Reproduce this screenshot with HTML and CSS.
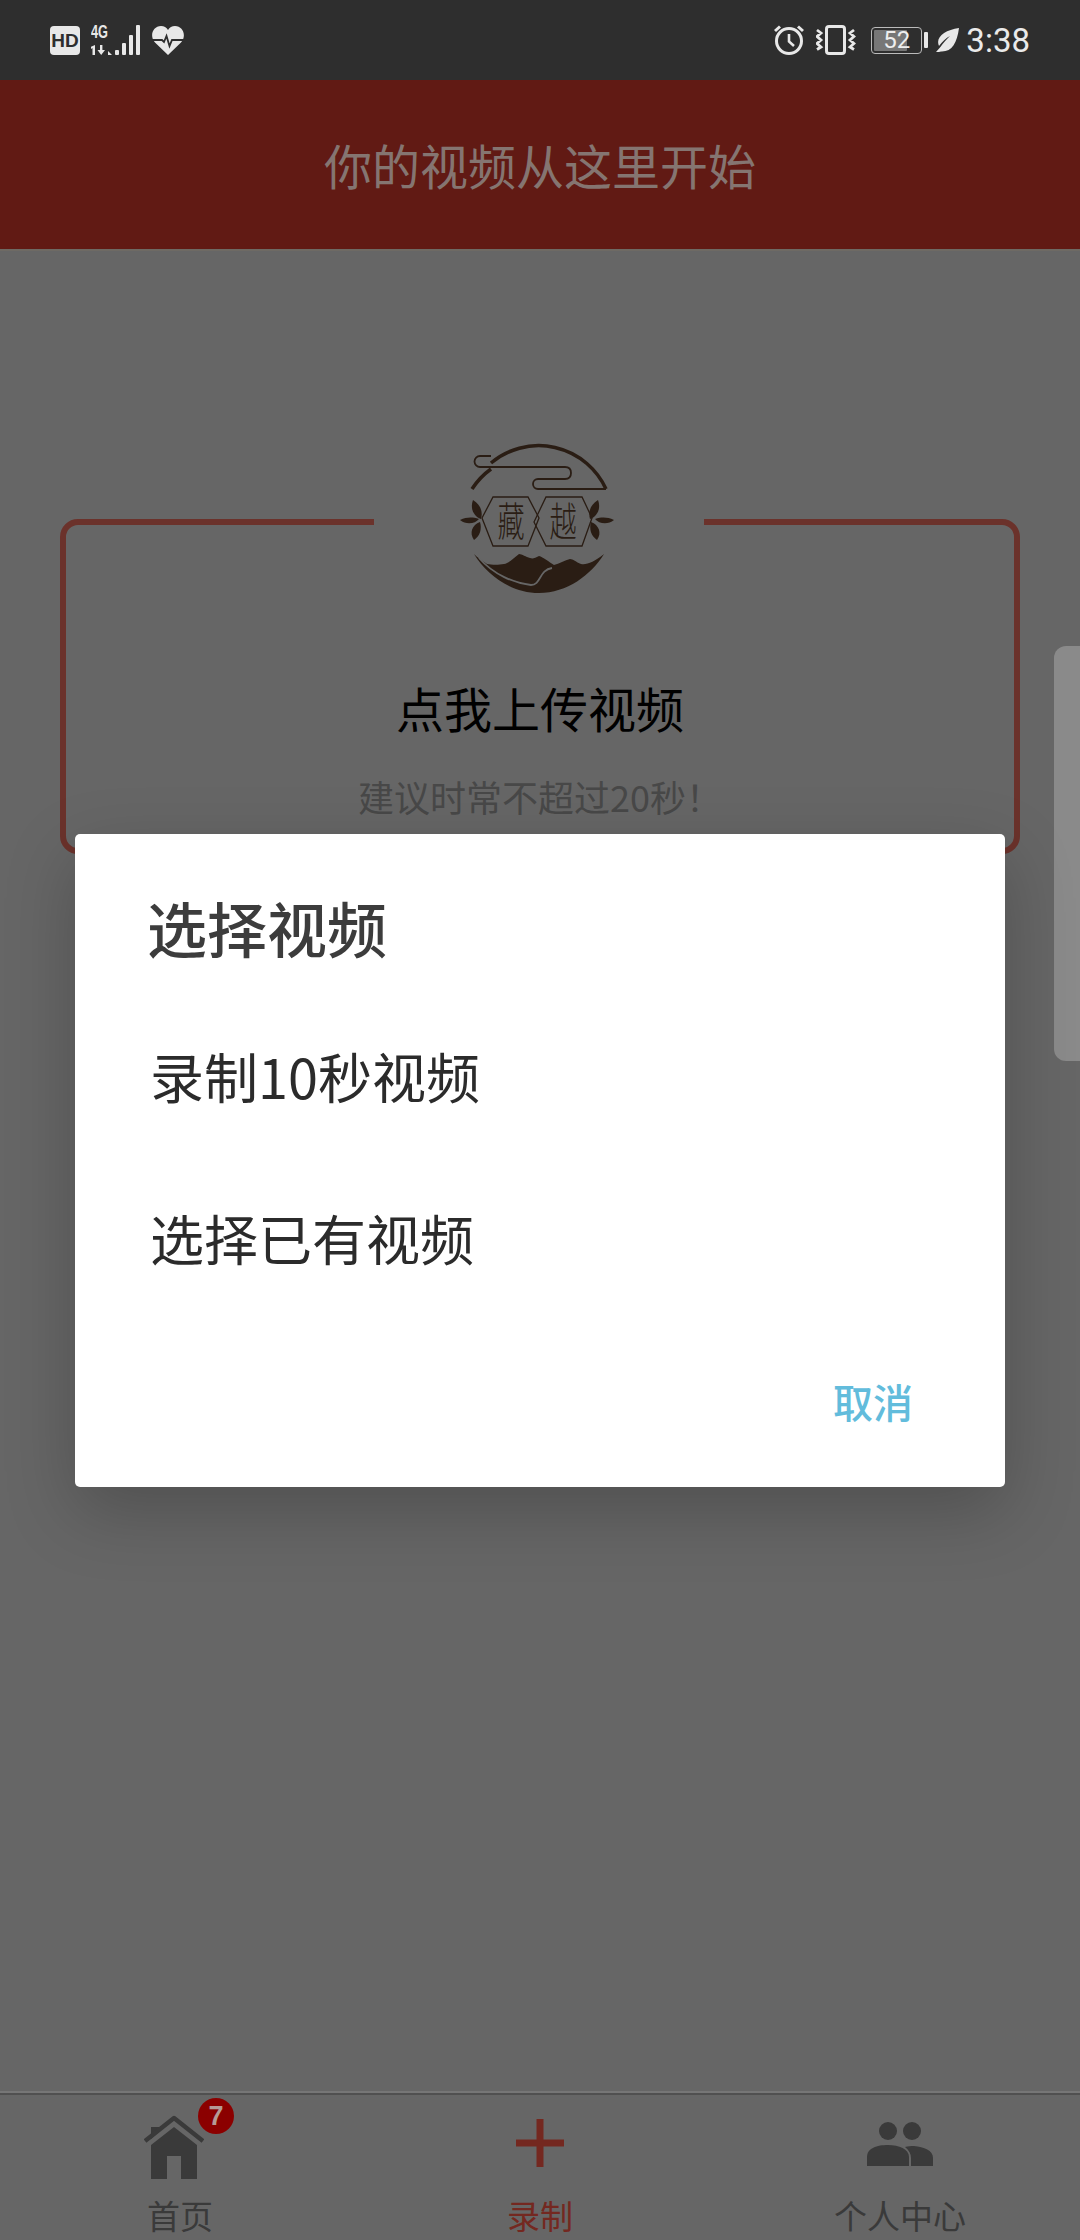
FILE: index.html
```html
<!DOCTYPE html>
<html lang="zh">
<head>
<meta charset="utf-8">
<title>选择视频</title>
<link rel="stylesheet" href="styles.css">
</head>
<body>
<div class="screen">
  <div class="status">
    <div class="status-left">
      <svg class="ic-hd" viewBox="0 0 30 29"><rect width="30" height="29" rx="4" fill="#e8e8e8"/><text x="15" y="21" class="hd-text">HD</text></svg>
      <svg class="ic-signal" viewBox="0 -5 50 37">
        <text x="0" y="14" class="net-text" textLength="17" lengthAdjust="spacingAndGlyphs">4G</text>
        <path d="M4 21v10H1.500v-7L0 25v-2.200zM9 21h2.400v5H14l-3.800 5L6.500 26H9z" fill="#e8e8e8"/>
        <path d="M17 31v-4l4 4z" fill="#e8e8e8"/>
        <rect x="24" y="26" width="4" height="5" rx="1" fill="#e8e8e8"/>
        <rect x="31" y="19" width="4" height="12" rx="1" fill="#e8e8e8"/>
        <rect x="38" y="11" width="4" height="20" rx="1" fill="#e8e8e8"/>
        <rect x="45" y="1" width="4" height="30" rx="1" fill="#e8e8e8"/>
      </svg>
      <svg class="ic-heart" viewBox="0 0 32 29">
        <path d="M16 29 3 16.500C-3 10 1 0 9 0c3 0 5.500 1.500 7 4 1.500-2.500 4-4 7-4 8 0 12 10 6 16.500z" fill="#e8e8e8"/>
        <path d="M0 14h10l2 2 2.500-6 3 10 2.500-6h12" fill="none" stroke="#2e2e2e" stroke-width="1.800"/>
      </svg>
    </div>
    <div class="status-right">
      <svg class="ic-alarm" viewBox="0 0 30 30">
        <circle cx="15" cy="16" r="12.500" fill="none" stroke="#e8e8e8" stroke-width="3"/>
        <path d="M15 9v7.500l5 4.500" fill="none" stroke="#e8e8e8" stroke-width="2.600"/>
        <path d="M1 6l5-4.500M29 6l-5-4.500" fill="none" stroke="#e8e8e8" stroke-width="3"/>
      </svg>
      <svg class="ic-vibrate" viewBox="0 0 40 30">
        <rect x="10.500" y="1.500" width="18" height="27" rx="2.500" fill="none" stroke="#e8e8e8" stroke-width="3"/>
        <path d="M1 5l4 3-4 3.500 4 3.500-4 3.500 4 3.500-4 2.500M38 5l-4 3 4 3.500-4 3.500 4 3.500-4 3.500 4 2.500" fill="none" stroke="#e8e8e8" stroke-width="2.800"/>
      </svg>
      <div class="battery-wrap">
        <div class="battery"><span class="battery-fill"></span><span class="battery-num">52</span></div>
        <span class="battery-nub"></span>
      </div>
      <svg class="ic-leaf" viewBox="0 0 23 24"><path d="M23 0C21 15 16 24 5 23.500L3 24H0l4-4.500C8 14 11 11 14 8c-4 2-8 6-11 10C-1 9 9 2 23 0z" fill="#e8e8e8"/></svg>
      <span class="time">3:38</span>
    </div>
  </div>

  <header class="header">你的视频从这里开始</header>

  <main class="main">
    <section class="card">
      <div class="logo">
        <svg class="logo-svg" viewBox="0 0 200 170">
          <g fill="none" stroke="#2a1d14">
            <path d="M33 59A74 74 0 0 1 52 39" stroke-width="3.500"/>
            <path d="M52 33A74 74 0 0 1 167 59" stroke-width="3.500"/>
            <path d="M52 26H41a5 5 0 0 0 0 11h85q6 0 6 6t-6 6H99a5 5 0 0 0 0 10h68" stroke-width="1.800"/>
            <path d="M43 88 54 67H89L100 88 89 116H54z" stroke-width="1.300"/>
            <path d="M95 92 107 67H143L153 88 143 116H107z" stroke-width="1.300"/>
          </g>
          <text class="logo-char" transform="translate(72 106) scale(.85 1.25)">藏</text>
          <text class="logo-char" transform="translate(124 106) scale(.85 1.25)">越</text>
          <g fill="#2a1d14">
            <path d="M34 70c8 5 10 12 8 19-8-3-11-11-8-19z"/>
            <path d="M21 90c7-3 12-3 19-1-4 5-13 6-19 1z"/>
            <path d="M35 110c-5-7-2-15 6-18 2 7 0 14-6 18z"/>
            <path d="M159 70c-8 5-10 12-8 19 8-3 11-11 8-19z"/>
            <path d="M175 90c-7-3-12-3-19-1 4 5 13 6 19 1z"/>
            <path d="M158 110c5-7 2-15-6-18-2 7 0 14 6 18z"/>
            <path d="M35 124C48 145 72 163 100 163C128 163 152 145 165 124C155 132 148 135 142 134C137 132 134 129 131 129C126 130 120 134 115 135C110 132 104 127 100 126C96 128 94 129 91 128C87 127 83 124 80 124C75 128 70 133 65 134C60 135 53 135 48 134C43 131 38 127 35 124z"/>
          </g>
          <path d="M40 128C55 145 75 153 92 155C102 155 100 140 113 138" fill="none" stroke="#666" stroke-width="1.800"/>
        </svg>
      </div>
      <div class="card-title">点我上传视频</div>
      <div class="card-sub">建议时常不超过20秒！</div>
    </section>
    <div class="side-tab"></div>
  </main>

  <nav class="tabs">
    <div class="tab">
      <span class="tab-icon">
        <svg class="ic-house" viewBox="0 0 60 64">
          <path d="M7 12h9v4L7 24z" fill="#3a3a3a"/>
          <path d="M1 26 30 3l29 23" fill="none" stroke="#3a3a3a" stroke-width="4.500" stroke-linejoin="round"/>
          <path d="M7 30 30 12l23 18v34H37V41H23v23H7z" fill="#3a3a3a"/>
        </svg>
        <span class="badge">7</span>
      </span>
      <span class="tab-label">首页</span>
    </div>
    <div class="tab tab-active">
      <span class="tab-icon">
        <svg class="ic-plus" viewBox="0 0 48 48"><path d="M20.500 0h7v20.500H48v7H27.500V48h-7V27.500H0v-7h20.500z" fill="#742820"/></svg>
      </span>
      <span class="tab-label">录制</span>
    </div>
    <div class="tab">
      <span class="tab-icon">
        <svg class="ic-people" viewBox="0 0 66 44">
          <circle cx="21" cy="9" r="9" fill="#3a3a3a"/><circle cx="45" cy="9" r="9" fill="#3a3a3a"/>
          <path d="M0 44V35c0-9 10-12 21-12s21 4 21 12v9z" fill="#3a3a3a"/>
          <path d="M44 44V36c0-4-2-8-6-11 3-1 6-1 9-1 10 1 19 4 19 12v8z" fill="#3a3a3a"/>
        </svg>
      </span>
      <span class="tab-label">个人中心</span>
    </div>
  </nav>

  <div class="dialog">
    <h2 class="dialog-title">选择视频</h2>
    <div class="dialog-item">录制10秒视频</div>
    <div class="dialog-item">选择已有视频</div>
    <div class="dialog-actions"><span class="dialog-cancel">取消</span></div>
  </div>
</div>
</body>
</html>
```
FILE: styles.css
```css
* { box-sizing: border-box; }
html, body { margin: 0; padding: 0; }
body { font-family: "Noto Sans CJK SC", "Noto Sans", sans-serif; background: #666; }
.screen { position: relative; width: 1080px; height: 2240px; display: flex; flex-direction: column; overflow: hidden; background: #666; }

.status { height: 80px; flex: none; background: #2e2e2e; display: flex; justify-content: space-between; align-items: center; padding: 0 50px 0 50px; }
.status-left, .status-right { display: flex; align-items: center; }
.ic-hd { width: 30px; height: 29px; margin-top: 1px; }
.hd-text { font: 700 19px "Liberation Sans", sans-serif; fill: #2e2e2e; text-anchor: middle; }
.ic-signal { width: 50px; height: 37px; margin-left: 11px; margin-top: -5px; }
.net-text { font: 700 19px "Liberation Sans", sans-serif; fill: #e8e8e8; }
.ic-heart { width: 32px; height: 29px; margin-left: 11px; margin-top: 1px; }
.ic-alarm { width: 30px; height: 30px; }
.ic-vibrate { width: 40px; height: 30px; margin-left: 12px; }
.battery-wrap { display: flex; align-items: center; margin-left: 15px; }
.battery { position: relative; width: 51px; height: 27px; border: 1.500px solid #bbb; border-radius: 4px; background: #2e2e2e; display: flex; align-items: center; justify-content: center; overflow: hidden; }
.battery-fill { position: absolute; left: 2px; top: 2px; bottom: 2px; width: 33px; background: #777; border-radius: 1px; }
.battery-num { position: relative; font: 400 24px Roboto, sans-serif; color: #eee; line-height: 1; }
.battery-nub { width: 4px; height: 16px; margin-left: 2px; background: #e8e8e8; border-radius: 1px; }
.ic-leaf { width: 23px; height: 24px; margin-left: 8px; }
.time { font: 400 33px Roboto, sans-serif; color: #eaeaea; margin-left: 7px; line-height: 1; }

.header { height: 171px; flex: none; background: #611a14; color: #857571; font-size: 48px; line-height: 48px; display: flex; align-items: center; justify-content: center; padding-bottom: 2px; border-bottom: 2px solid #6e6a64; }

.main { flex: 1; position: relative; padding: 268px 60px 0 60px; }
.card { position: relative; height: 335px; border: 6px solid #6b322b; border-radius: 18px; display: flex; flex-direction: column; align-items: center; padding-top: 152px; }
.logo { position: absolute; left: 308px; top: -95px; width: 330px; height: 170px; display: flex; justify-content: center; background: #666; }
.logo-svg { width: 200px; height: 170px; }
.logo-char { font-size: 32px; font-weight: 300; fill: #2a1d14; text-anchor: middle; }
.card-title { font-size: 48px; line-height: 60px; color: #000; }
.card-sub { font-size: 36px; line-height: 48px; color: #484848; margin-top: 35px; }

.side-tab { position: absolute; right: 0; top: 395px; width: 26px; height: 415px; background: #8a8a8a; border-radius: 12px 0 0 12px; }

.tabs { height: 147px; flex: none; display: grid; grid-template-columns: repeat(3, 1fr); border-top: 2px solid #505050; box-shadow: 0 -2px 0 #767676; overflow: hidden; }
.tab { display: flex; flex-direction: column; align-items: center; color: #3a3a3a; }
.tab-active { color: #742820; }
.tab-icon { position: relative; height: 99px; display: flex; align-items: center; justify-content: center; }
.tab-label { font-size: 33px; line-height: 42px; }
.ic-house { width: 60px; height: 64px; margin: 5px 12px 0 0; }
.ic-plus { width: 48px; height: 48px; margin-top: -3px; }
.ic-people { width: 66px; height: 44px; margin-top: -2px; }
.badge { position: absolute; left: 54px; top: 3px; width: 36px; height: 36px; border-radius: 50%; background: #8b0000; color: #b59a96; font: 700 27px/36px "Liberation Sans", sans-serif; text-align: center; }

.dialog { position: absolute; left: 75px; top: 834px; width: 930px; height: 653px; background: #fff; border-radius: 5px; box-shadow: 0 24px 70px rgba(0, 0, 0, .22); padding: 53px 0 0 75px; }
.dialog-title { margin: 0 0 0 -3px; font-size: 60px; line-height: 80px; font-weight: 500; color: #3c3c3c; }
.dialog-item { font-size: 54px; line-height: 72px; color: #2b2b2b; }
.dialog-title + .dialog-item { margin-top: 73px; }
.dialog-item + .dialog-item { margin-top: 90px; }
.dialog-actions { display: flex; justify-content: flex-end; padding-right: 92px; margin-top: 99px; }
.dialog-cancel { font-size: 40px; line-height: 56px; font-weight: 500; color: #62bcdc; }
```
